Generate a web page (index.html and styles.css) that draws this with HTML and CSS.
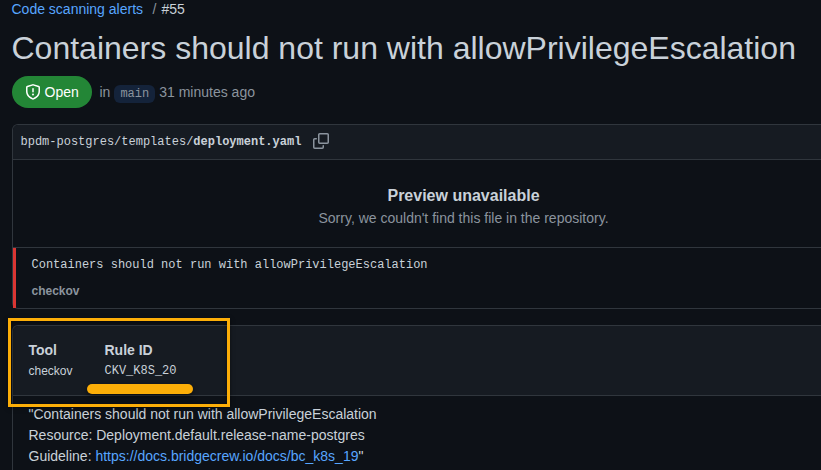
FILE: index.html
```html
<!DOCTYPE html>
<html lang="en">
<head>
<meta charset="utf-8">
<title>Code scanning alert #55</title>
<link rel="stylesheet" href="styles.css">
</head>
<body>
<main class="page">
  <nav class="crumbs"><a href="#">Code scanning alerts</a><span class="slash">/</span><span>#55</span></nav>
  <h1 class="title">Containers should not run with allowPrivilegeEscalation</h1>
  <div class="meta">
    <span class="state">
      <svg width="16" height="16" viewBox="0 0 16 16" fill="currentColor"><path fill-rule="evenodd" d="M8.533.133a1.75 1.75 0 00-1.066 0l-5.25 1.68A1.75 1.75 0 001 3.48V7c0 1.566.32 3.182 1.303 4.682.983 1.498 2.585 2.813 5.032 3.855a1.7 1.7 0 001.33 0c2.447-1.042 4.049-2.357 5.032-3.855C14.68 10.182 15 8.566 15 7V3.48a1.75 1.75 0 00-1.217-1.667L8.533.133zm-.61 1.429a.25.25 0 01.153 0l5.25 1.68a.25.25 0 01.174.238V7c0 1.358-.275 2.666-1.057 3.86-.784 1.194-2.121 2.34-4.366 3.297a.2.2 0 01-.154 0c-2.245-.956-3.582-2.104-4.366-3.298C2.775 9.666 2.5 8.36 2.5 7V3.48a.25.25 0 01.174-.237l5.25-1.68zM8.75 4.75a.75.75 0 00-1.5 0v3a.75.75 0 001.5 0v-3zM9 10.5a1 1 0 11-2 0 1 1 0 012 0z"/></svg>
      Open
    </span>
    <span>in</span><code class="branch">main</code><span>31 minutes ago</span>
  </div>

  <section class="card">
    <header class="file">
      <span>bpdm-postgres/templates/<b>deployment.yaml</b></span>
      <svg width="16" height="16" viewBox="0 0 16 16" fill="currentColor"><path d="M0 6.75C0 5.784.784 5 1.75 5h1.5a.75.75 0 010 1.5h-1.5a.25.25 0 00-.25.25v7.5c0 .138.112.25.25.25h7.5a.25.25 0 00.25-.25v-1.5a.75.75 0 011.5 0v1.5A1.75 1.75 0 019.25 16h-7.5A1.75 1.75 0 010 14.25v-7.5z"/><path fill-rule="evenodd" d="M5 1.75C5 .784 5.784 0 6.75 0h7.5C15.216 0 16 .784 16 1.75v7.5A1.75 1.75 0 0114.25 11h-7.5A1.75 1.75 0 015 9.25v-7.5zm1.75-.25a.25.25 0 00-.25.25v7.5c0 .138.112.25.25.25h7.5a.25.25 0 00.25-.25v-7.5a.25.25 0 00-.25-.25h-7.5z"/></svg>
    </header>
    <div class="preview">
      <h2>Preview unavailable</h2>
      <p>Sorry, we couldn't find this file in the repository.</p>
    </div>
    <div class="message">
      <code>Containers should not run with allowPrivilegeEscalation</code>
      <strong>checkov</strong>
    </div>
  </section>

  <section class="card details">
    <header class="rule">
      <div class="field tool"><h3>Tool</h3><span>checkov</span></div>
      <div class="field"><h3>Rule ID</h3><code>CKV_K8S_20</code></div>
    </header>
    <div class="text">
      <p>"Containers should not run with allowPrivilegeEscalation</p>
      <p>Resource: Deployment.default.release-name-postgres</p>
      <p>Guideline: <a href="#">https://docs.bridgecrew.io/docs/bc_k8s_19</a>"</p>
    </div>
    <div class="highlight"></div>
    <div class="underline"></div>
  </section>
</main>
</body>
</html>
```
FILE: styles.css
```css
* { box-sizing: border-box; }
body {
  margin: 0;
  background: #0d1117;
  color: #c9d1d9;
  font: 14px/21px "Liberation Sans", Arial, sans-serif;
}
h1, h2, h3, p { margin: 0; }
a { color: #58a6ff; text-decoration: none; }
code { font-family: "Liberation Mono", monospace; font-size: 12px; }
svg { display: block; flex: none; }

.page { padding-left: 11.5px; }
.crumbs { height: 19px; line-height: 19px; white-space: pre; }
.slash { color: #8b949e; margin: 0 5px 0 9.5px; }
.title { margin-top: 9px; font-size: 32px; line-height: 40px; font-weight: 400; white-space: nowrap; }

.meta { display: flex; align-items: center; height: 32px; margin-top: 8px; color: #8b949e; }
.state {
  display: flex;
  align-items: center;
  gap: 4px;
  width: 80px;
  height: 32px;
  margin-right: 8px;
  padding-left: 13px;
  border-radius: 16px;
  background: #238636;
  color: #fff;
}
.branch {
  height: 18px;
  margin: 3px 4px 0;
  padding: 0 6px;
  border-radius: 6px;
  background: #14233a;
  line-height: 18px;
}

.card {
  position: relative;
  margin-top: 16px;
  border: 1px solid #30363d;
  border-right: 0;
  border-radius: 6px 0 0 6px;
}
.file {
  display: flex;
  align-items: center;
  gap: 11.5px;
  height: 35px;
  padding-left: 8px;
  border-bottom: 1px solid #30363d;
  border-radius: 5px 0 0 0;
  background: #161b22;
  font: 12px/20px "Liberation Mono", monospace;
}
.file svg { color: #8b949e; margin-top: -2px; }
.preview {
  height: 88px;
  padding: 24px 0 0 93.5px;
  border-bottom: 1px solid #30363d;
  text-align: center;
  color: #8b949e;
}
.preview h2 { color: #c9d1d9; font-size: 16px; line-height: 24px; }
.message {
  display: flex;
  flex-direction: column;
  height: 60px;
  padding: 7px 0 0 16px;
  border-left: 3px solid #da3633;
}
.message code { line-height: 20px; }
.message strong { margin-top: 7px; color: #8b949e; font-size: 12px; line-height: 18px; }

.details { height: 145px; border-bottom: 0; border-radius: 6px 0 0 0; }
.rule {
  display: flex;
  height: 70px;
  padding: 14px 0 0 16px;
  border-bottom: 1px solid #30363d;
  border-radius: 5px 0 0 0;
  background: #161b22;
}
.field { display: flex; flex-direction: column; font-size: 12px; line-height: 20px; }
.field h3 { font-size: 14px; line-height: 21px; }
.tool { width: 76px; }
.text { padding: 8px 16px 0; }

.highlight {
  position: absolute;
  left: -4.5px;
  top: -8px;
  width: 222px;
  height: 89px;
  border: 3px solid #fcae08;
  box-shadow: 0 1px 4px #0008, inset 0 1px 4px #0008;
}
.underline {
  position: absolute;
  left: 74.5px;
  top: 58px;
  width: 106px;
  height: 10px;
  border-radius: 5px;
  background: #fcae08;
  box-shadow: 0 2px 5px #0008;
}
```
